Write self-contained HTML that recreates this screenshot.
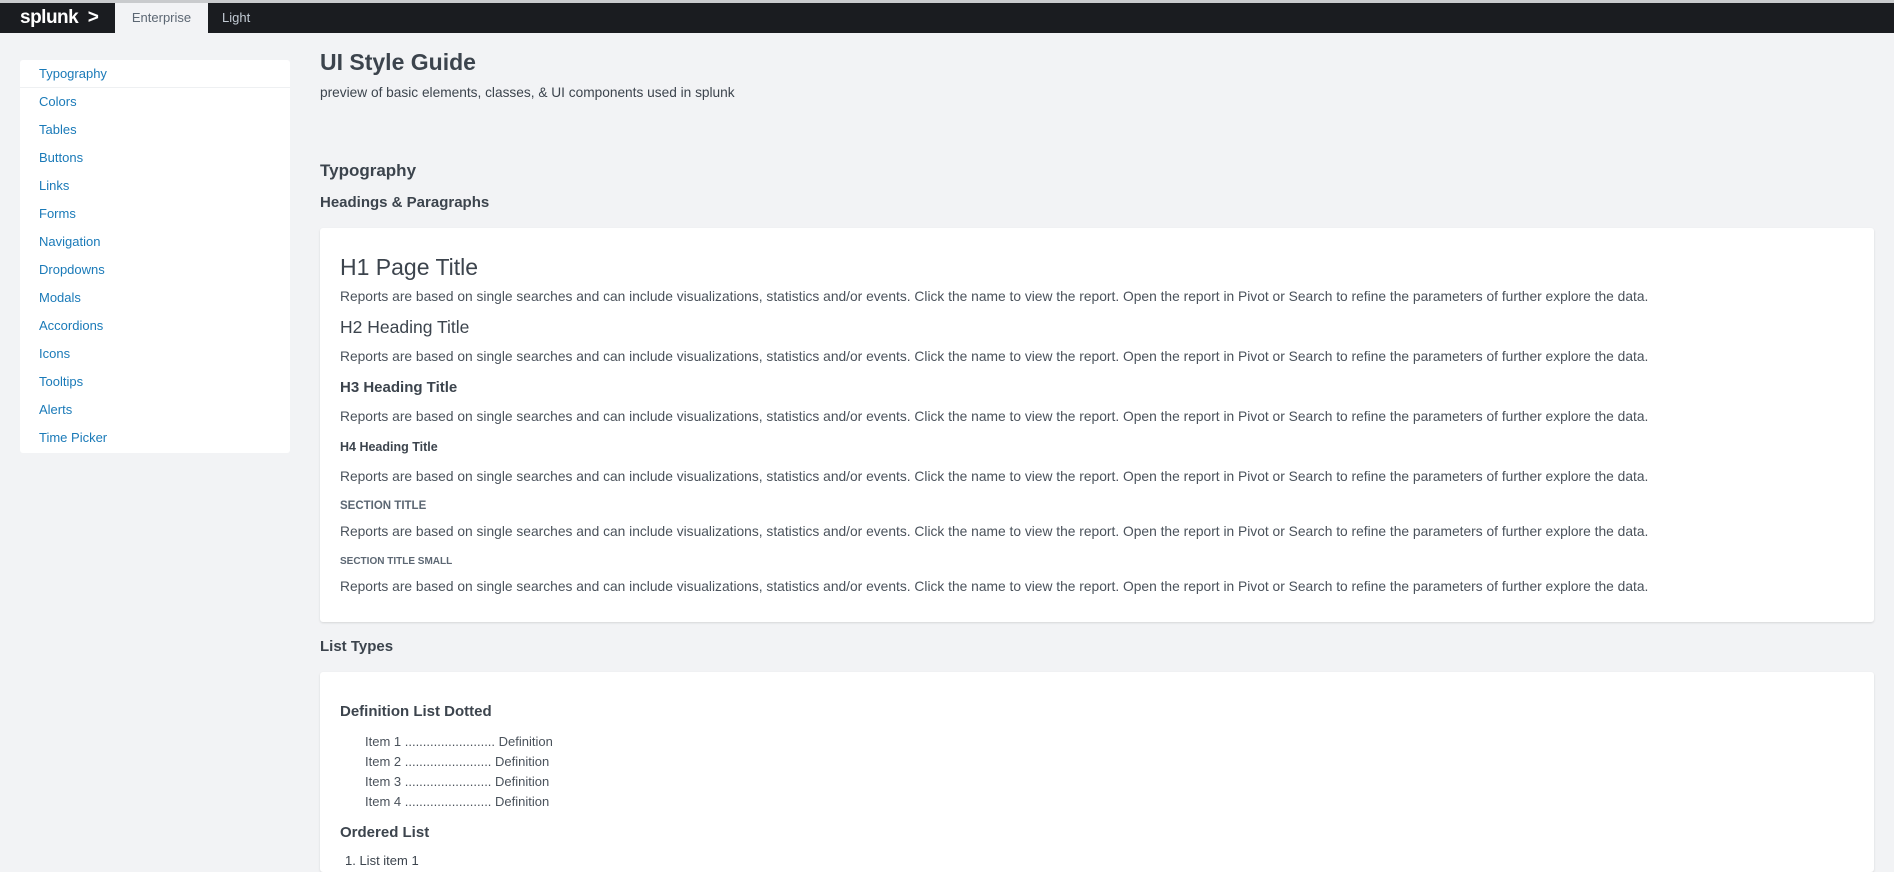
<!DOCTYPE html>
<html><head><style>
*{margin:0;padding:0;box-sizing:border-box}
body{width:1894px;height:858px;overflow:hidden;background:#f2f3f5;font-family:"Liberation Sans",sans-serif;color:#3c444d;position:relative}
.top{position:absolute;left:0;top:0;width:1894px;height:3px;background:#c9cbcd}
.nav{position:absolute;left:0;top:3px;width:1894px;height:30px;background:#1a1c20}
.logo{position:absolute;left:20px;top:4px;color:#fff;font-size:19px;font-weight:bold;letter-spacing:-0.5px}
.tab{position:absolute;left:115px;top:0;width:93px;height:30px;background:#f2f3f5;color:#5c6773;font-size:13px;text-align:center;line-height:30px}
.light{position:absolute;left:222px;top:0;line-height:30px;color:#c3cbd4;font-size:13px}
.side{position:absolute;left:20px;top:60px;width:270px;height:393px;background:#fff;border-radius:3px}
.side a{display:block;height:28px;line-height:28px;padding-left:19px;color:#1a7ab8;font-size:13px;text-decoration:none}
.side a:first-child{border-bottom:1px solid #eef0f2}
.abs{position:absolute;white-space:nowrap}
.card{position:absolute;left:320px;width:1554px;background:#fff;border-radius:3px;box-shadow:0 1px 2px rgba(0,0,0,.12)}
p.t{font-size:13.8px;color:#4a525b}
</style></head><body>
<div class="top"></div>
<div class="nav"><div class="logo">splunk &nbsp;&gt;</div><div class="tab">Enterprise</div><div class="light">Light</div></div>
<div class="side"><a>Typography</a><a>Colors</a><a>Tables</a><a>Buttons</a><a>Links</a><a>Forms</a><a>Navigation</a><a>Dropdowns</a><a>Modals</a><a>Accordions</a><a>Icons</a><a>Tooltips</a><a>Alerts</a><a>Time Picker</a></div>
<div class="abs" style="left:320px;top:49px;font-size:23px;font-weight:bold;color:#3c444d">UI Style Guide</div>
<div class="abs" style="left:320px;top:85px;font-size:13.7px">preview of basic elements, classes, &amp; UI components used in splunk</div>
<div class="abs" style="left:320px;top:161px;font-size:17px;font-weight:bold">Typography</div>
<div class="abs" style="left:320px;top:194px;font-size:15px;font-weight:bold">Headings &amp; Paragraphs</div>
<div class="card" style="top:228px;height:394px"></div>
<div class="abs" style="left:340px;top:254px;font-size:23px">H1 Page Title</div>
<p class="t abs" style="left:340px;top:289px">Reports are based on single searches and can include visualizations, statistics and/or events. Click the name to view the report. Open the report in Pivot or Search to refine the parameters of further explore the data.</p>
<div class="abs" style="left:340px;top:317px;font-size:17.5px">H2 Heading Title</div>
<p class="t abs" style="left:340px;top:349px">Reports are based on single searches and can include visualizations, statistics and/or events. Click the name to view the report. Open the report in Pivot or Search to refine the parameters of further explore the data.</p>
<div class="abs" style="left:340px;top:379px;font-size:15px;font-weight:bold">H3 Heading Title</div>
<p class="t abs" style="left:340px;top:409px">Reports are based on single searches and can include visualizations, statistics and/or events. Click the name to view the report. Open the report in Pivot or Search to refine the parameters of further explore the data.</p>
<div class="abs" style="left:340px;top:440px;font-size:12.5px;font-weight:bold">H4 Heading Title</div>
<p class="t abs" style="left:340px;top:469px">Reports are based on single searches and can include visualizations, statistics and/or events. Click the name to view the report. Open the report in Pivot or Search to refine the parameters of further explore the data.</p>
<div class="abs" style="left:340px;top:500px;font-size:11.5px;font-weight:bold;color:#5c6773">SECTION TITLE</div>
<p class="t abs" style="left:340px;top:524px">Reports are based on single searches and can include visualizations, statistics and/or events. Click the name to view the report. Open the report in Pivot or Search to refine the parameters of further explore the data.</p>
<div class="abs" style="left:340px;top:556px;font-size:10px;font-weight:bold;color:#5c6773">SECTION TITLE SMALL</div>
<p class="t abs" style="left:340px;top:579px">Reports are based on single searches and can include visualizations, statistics and/or events. Click the name to view the report. Open the report in Pivot or Search to refine the parameters of further explore the data.</p>
<div class="abs" style="left:320px;top:638px;font-size:15px;font-weight:bold">List Types</div>
<div class="card" style="top:672px;height:200px"></div>
<div class="abs" style="left:340px;top:703px;font-size:15px;font-weight:bold">Definition List Dotted</div>
<div class="abs" style="left:365px;top:732px;font-size:13px;line-height:20px;color:#4a525b">Item 1 ......................... Definition<br>Item 2 ........................ Definition<br>Item 3 ........................ Definition<br>Item 4 ........................ Definition</div>
<div class="abs" style="left:340px;top:824px;font-size:15px;font-weight:bold">Ordered List</div>
<div class="abs" style="left:345px;top:853px;font-size:13px">1. List item 1</div>
</body></html>
